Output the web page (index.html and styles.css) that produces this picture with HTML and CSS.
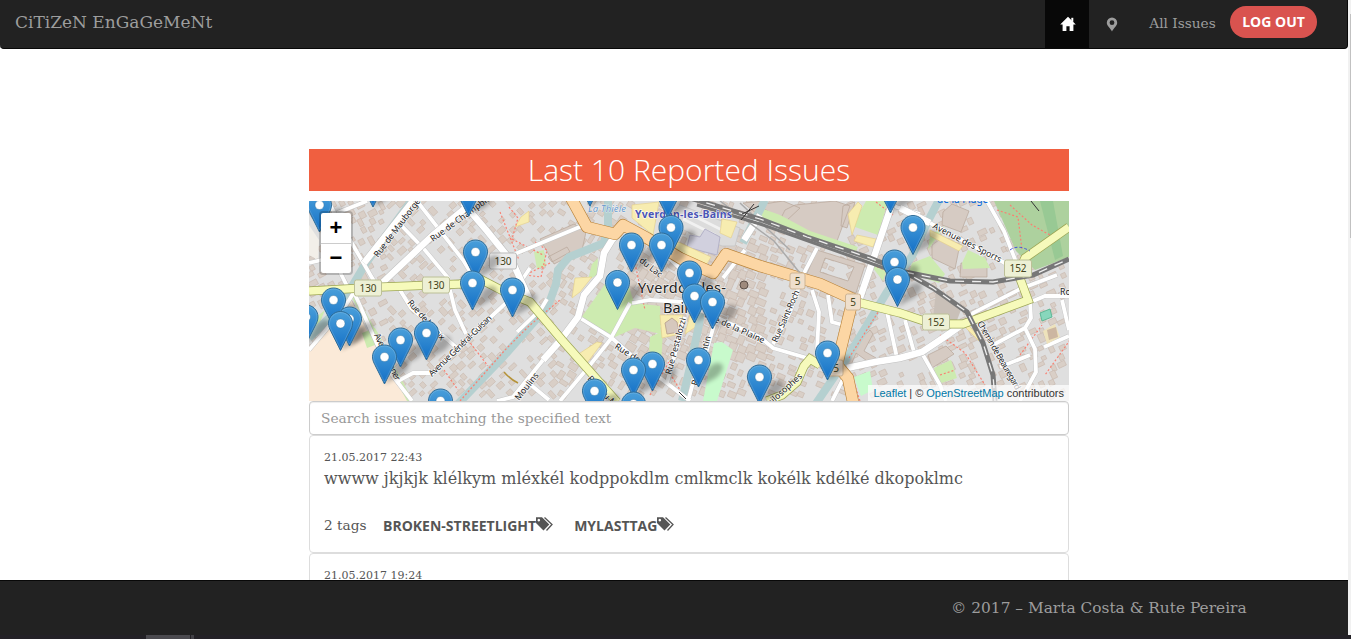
FILE: index.html
```html
<!DOCTYPE html>
<html lang="en">
<head>
<meta charset="utf-8">
<title>Citizen Engagement</title>
<link rel="stylesheet" href="styles.css">
</head>
<body>
<div class="window">
  <div class="page">
    <nav class="navbar">
      <a class="brand">CiTiZeN EnGaGeMeNt</a>
      <div class="nav-links">
        <a class="nav-item active"><svg width="16" height="16" viewBox="0 0 16 16"><path fill="#fff" d="M8 .8 15.8 8.6H13.4V15H9.6V10.3H6.4V15H2.6V8.6H.2Z"/><path fill="#fff" d="M11.3 1.8h2v4h-2z"/></svg></a>
        <a class="nav-item pin"><svg width="12" height="15" viewBox="0 0 12 15"><path fill="#9d9d9d" fill-rule="evenodd" d="M6 .5A5.2 5.2 0 0 0 .8 5.7C.8 9 4.4 11 6 14.5 7.600 11 11.200 9 11.200 5.700A5.200 5.200 0 0 0 6 .5ZM6 3.300A2.400 2.400 0 1 1 6 8.100 2.400 2.400 0 0 1 6 3.300Z"/></svg></a>
        <a class="nav-item issues">All Issues</a>
        <button class="logout">LOG OUT</button>
      </div>
    </nav>
    <main class="content">
      <h2 class="title">Last 10 Reported Issues</h2>
      <div class="map">
        <svg class="tiles" width="760" height="200" viewBox="309 201 760 200">
          <defs>
            <linearGradient id="pinFill" x1="0" y1="0" x2="0" y2="1"><stop offset="0" stop-color="#4a9fda"/><stop offset="1" stop-color="#126fc6"/></linearGradient>
            <filter id="soft" x="-50%" y="-50%" width="200%" height="200%"><feGaussianBlur stdDeviation="2.2"/></filter>
            <g id="shade"><path d="M0 27 10 8Q18 0 24 5 26 11 17 18Z" fill="#000" opacity=".27" filter="url(#soft)"/></g>
            <g id="marker"><path d="M0-12C-6.800-12-12-6.600-12-.2-12 3-10.800 5.500-9.700 7.700L0 27 9.700 7.700C10.800 5.500 12 3 12-.2 12-6.600 6.800-12 0-12Z" fill="url(#pinFill)" stroke="#2e6c97"/><path d="M0-11C-6-11-11-6-11-.2-11 3-10 5-8.800 7.300L0 25 8.800 7.300C10 5 11 3 11-.2 11-6 6-11 0-11Z" fill="none" stroke="#fff" stroke-opacity=".15"/><circle r="4.500" fill="#fff" stroke="#2e6c97" stroke-opacity=".5" stroke-width=".8"/></g>
            <g id="streets" fill="none">
              <path d="M337 213 367 201M330 205 350 240 371 276 377 286M417 201 463 260 474 278M398 222 424 249 449 279M309 263 343 255M340 272 349 290"/>
              <path d="M353 290 377 344 392 375 412 401M400 290 411 308 457 348M450 290 455 310 466 334M398 381 413 373 433 373 466 340 507 302 530 268M309 350 345 307 354 292"/>
              <path d="M510 256 582 226M517 332 541 309 547 299M497 401 513 397 543 360 560 343M560 401 586 370 610 340 630 303M580 318 612 338 633 357 690 401M525 380 549 400"/>
              <path d="M685 317 667 383M714 325 704 360 693 383 688 401M632 303 650 300 700 303M700 310 760 337 773 348 807 358 820 365M817 248 803 275 790 312 773 344M812 290 819 312 817 350M828 295 832 322 843 325M645 235 690 278 724 300"/>
              <path d="M887 312 897 358M905 320 914 352M900 208 930 223 1003 262 1018 271M987 201 1004 231 1018 267M971 319 973 313 1020 289 1057 275M1030 302 1031 318 1025 328 993 345M1025 328 1035 349 1036 372 1020 401M1000 367 1030 355M1033 301 1045 296 1069 296M923 355 940 385 946 401M1044 347 1069 336M1062 300 1069 330M745 250 723 278M890 205 920 214M832 401 844 377 847 367"/>
            </g>
            <g id="wideStreets" fill="none">
              <path d="M380 285 432 236 475 200M413 201 364 263M463 203 487 231 513 263 529 298M543 360 560 341 578 317 584 295 600 276 604 253 612 240 620 232M860 298 876 251 893 201M847 368 875 362 900 358 922 352 943 338 963 324M760 215 744 240M900 208 930 223"/>
            </g>
            <path id="yellowRoad" fill="none" d="M309 291 382 287 460 284 480 279 505 292 530 302 562 340 617 402M857 302 900 313 933 324 963 324 1028 300 1018 273 1025 258 1069 227M767 401 782 395 797 382 804 366 810 359 820 365"/>
            <path id="orangeRoad" fill="none" stroke-linejoin="round" d="M570 196 587 227 615 234 623 225 647 238 680 258 713 273 726 254 760 266 820 284 853 299 840 352 837 365 848 378 853 402"/>
            <path id="rails" fill="none" d="M690 198 760 219 807 237 870 258 905 272 933 288 967 312 983 343 993 375 995 401M905 272 950 281 993 282 1033 275 1069 259"/>
          </defs>
          <rect x="309" y="201" width="760" height="200" fill="#dfdfdf"/>
          <g id="buildings" class="building"></g>
          <g class="big-building">
            <path d="M540 239 574 224 586 232 582 250 554 264ZM795 205 835 201 850 206 837 241 810 233 780 220 785 210ZM943 212 952 204 969 211 961 232 942 225ZM932 245 942 238 960 244 955 269 932 258ZM961 263 987 263 987 277 960 277ZM843 206 855 202 847 228 841 226ZM743 203 764 201 756 213ZM758 205 783 201 800 208 785 222ZM857 343 870 330 873 334 864 351 876 358 870 363 856 353 849 370 844 366ZM928 355 946 346 954 354 932 368ZM548 257 567 247 570 252 552 262Z"/>
            <path fill-rule="evenodd" d="M817 250 865 265 856 293 806 276ZM825 258 820 272 848 281 854 267Z"/>
          </g>
          <path d="M680 205 740 228 735 246 722 246 700 237 665 222Z" fill="#dcdcdc" stroke="#c9c9c9"/>
          <path d="M688 213 722 230M683 219 715 235" stroke="#f1f1f1" stroke-width="3"/>
          <path d="M690 235 700 237 705 229 720 237 717 255 705 252 687 247Z" fill="#d1d0de" stroke="#b4b2c8"/>
          <path d="M936 291 962 307 956 323 933 318Z" fill="#c9c0b8"/>
          <g fill="#fbead8"><path d="M309 348 351 300 377 350 408 401H309Z"/><path d="M309 225 319 240 318 260 309 255Z" fill="#f2efe9"/></g>
          <g fill="#cdebb0">
            <path d="M351 296 356 294 413 401 407 401ZM362 333 375 328 383 342 367 348ZM309 323 325 310 318 327 309 334ZM581 318 605 284 628 283 634 303 660 306 661 334 635 328 615 337ZM592 264 598 258 597 275 588 280ZM650 337 663 331 661 365 649 350ZM758 207 780 215 810 231 858 247 855 253 808 236 756 216ZM866 201 888 201 878 235 852 226ZM962 263 968 250 985 258 990 268 963 269ZM912 263 930 256 945 274 939 283 909 273ZM930 235 945 226 928 250ZM934 368 951 360 957 378 938 384ZM869 263 887 269 883 281ZM534 252 544 250 546 266 537 269Z"/>
            <path fill="#c8facc" d="M714 343 722 342 733 350 717 401H703ZM854 377 870 371 873 390 861 396Z"/>
            <path fill="#add19e" d="M994 201H1069V257L1035 270 1016 251Z"/>
            <path fill="#98c994" d="M1040 201 1053 201 1063 256 1055 260Z"/>
          </g>
          <g fill="#f7ecb0" stroke="#e4cf88" stroke-width=".6"><path d="M632 205 659 202 653 235 632 218ZM676 241 711 257 705 267 676 254ZM521 217 529 211 529 222 515 227ZM577 355 597 342 602 343 587 363ZM575 278 592 277 580 292 572 298ZM848 214 858 202 862 206 852 235ZM857 235 876 239 873 247 854 241ZM930 230 963 246 959 251 930 236ZM722 219 737 222 731 238 720 233ZM967 323 976 334 979 341 966 328ZM660 315 683 315 680 334 662 338ZM690 315 697 326 685 334Z"/></g>
          <path d="M665 323 672 318 677 322 679 332 667 334Z" fill="#d6c8bd" stroke="#bea894"/>
          <g class="river"><path d="M309 338 333 314 351 288 366 263 412 200M456 406 503 357 548 306 556 284 558 270 569 257 604 243 608 225 608 198M940 198 927 223 912 256 887 292 847 358 815 405M765 200 743 243M702 302 699 325 690 367 682 401"/></g>
          <g class="footway"><path d="M460 401 505 350 529 326 560 300M468 340 488 366M444 370 458 390M500 212 519 260M509 207 518 218 512 239 543 255M535 242 547 250 541 277 525 275 550 263M997 210 1018 217 1022 250M1010 205 1032 225 1050 235M849 358 882 306M866 262 887 271M940 335 965 353 985 385M940 375 955 370M853 380 860 401M1020 355 1042 325M1070 340 1045 375M630 240 645 310M650 395 670 360M703 300 725 307M668 370 680 390M876 202 893 215"/></g>
          <use href="#streets" stroke="#c4c4c4" stroke-width="4.700"/><use href="#streets" stroke="#fff" stroke-width="3.800"/>
          <use href="#wideStreets" stroke="#c0c0c0" stroke-width="7.500"/><use href="#wideStreets" stroke="#fff" stroke-width="6.500"/>
          <g fill="none"><use href="#yellowRoad" stroke="#9ca554" stroke-width="9"/><use href="#yellowRoad" stroke="#f6fabb" stroke-width="7.600"/><use href="#orangeRoad" stroke="#b98339" stroke-width="12"/><use href="#orangeRoad" stroke="#fcd6a4" stroke-width="10.800"/></g>
          <path d="M720 201 774 241 804 278M740 203 790 250" fill="none" stroke="#aaa" stroke-width="1.500"/>
          <use href="#rails" stroke="#777" stroke-width="5"/><use href="#rails" stroke="#eee" stroke-width="1.300" stroke-dasharray="9 8"/>
          <path d="M697 205 760 224 870 263 905 276" fill="none" stroke="#777" stroke-width="3"/>
          <path d="M1010 250Q1018 244 1030 251" fill="none" stroke="#4455dd" stroke-dasharray="3 2"/>
          <path d="M504 372Q510 379 518 383" fill="none" stroke="#b59338" stroke-width="1.500"/>
          <path d="M1040 313 1050 309 1052 317 1042 321Z" fill="#88d7bc" stroke="#5eb795"/>
          <path d="M1043 331 1055 324 1060 337 1047 344Z" fill="#eee2bb"/><path d="M1047 330 1056 327 1058 337 1049 340Z" fill="#ccb6a1"/>
          <g class="street-names">
            <text transform="translate(378 258) rotate(-53)" textLength="74">Rue de Mauborget</text>
            <text transform="translate(433 242) rotate(-36)">Rue de Champblond</text>
            <text transform="translate(407 303) rotate(48)" textLength="51">Rue de la Paix</text>
            <text transform="translate(374 335) rotate(65)" textLength="51">Avenue Kiener</text>
            <text transform="translate(432 377) rotate(-44)" textLength="84">Avenue Général-Guisan</text>
            <text transform="translate(519 401) rotate(-52)">Moulins</text>
            <text transform="translate(587 379) rotate(47)">Rue du Midi</text>
            <text transform="translate(614 348) rotate(32)">Rue des</text>
            <text transform="translate(633 257) rotate(38)">e du Lac</text>
            <text transform="translate(671 375) rotate(-75)">Rue Pestalozzi</text>
            <text transform="translate(697 386) rotate(-74)">Rue Valentin</text>
            <text transform="translate(704 317) rotate(24)">Rue de la Plaine</text>
            <text transform="translate(777 343) rotate(-66)" textLength="56">Rue Saint-Roch</text>
            <text transform="translate(766 410) rotate(-42)">Philosophes</text>
            <text transform="translate(932 228) rotate(27)" textLength="76">Avenue des Sports</text>
            <text transform="translate(977 323) rotate(60)" textLength="78">Chemin de Beauregard</text>
            <text x="1060" y="295">Rou</text>
          </g>
          <text class="water-name" x="588" y="212" textLength="38">La Thièle</text>
          <text class="station" x="635" y="218" textLength="97">Yverdon-les-Bains</text>
          <text class="place" x="937" y="203">de la Plage</text>
          <g class="town"><text x="638" y="293" textLength="88">Yverdon-les-</text><text x="663" y="313" textLength="37">Bains</text></g>
          <circle cx="744" cy="285" r="4" fill="#9e8a7c" stroke="#5d5149"/>
          <path d="M754 204 741 220M759 206 742 214M1031 201 1039 211M679 392 686 399" fill="none" stroke="#333"/>
          <g class="shields"><g><rect x="354.500" y="280" width="27" height="16" rx="2"/><text x="368" y="292">130</text></g><g><rect x="422.500" y="277" width="27" height="16" rx="2"/><text x="436" y="289">130</text></g><g class="grey"><rect x="489.500" y="253" width="27" height="16" rx="2"/><text x="503" y="265">130</text></g><g><rect x="922.500" y="314" width="27" height="16" rx="2"/><text x="936" y="326">152</text></g><g><rect x="1004.500" y="260" width="27" height="17" rx="2"/><text x="1018" y="272">152</text></g><g class="tan"><rect x="790" y="273" width="15" height="16" rx="2"/><text x="797.500" y="285">5</text><rect x="845.500" y="294" width="15" height="16" rx="2"/><text x="853" y="306">5</text><rect x="828" y="360" width="15" height="16" rx="2"/><text x="836" y="372">5</text></g></g>
          <g id="markers"></g>
        </svg>
        <div class="zoom-control"><a>+</a><a>−</a></div>
        <div class="attribution"><a>Leaflet</a> | © <a>OpenStreetMap</a> contributors</div>
      </div>
      <input class="search" placeholder="Search issues matching the specified text">
      <article class="issue">
        <time class="date">21.05.2017 22:43</time>
        <p class="description">wwww jkjkjk klélkym mléxkél kodppokdlm cmlkmclk kokélk kdélké dkopoklmc</p>
        <div class="tags"><span class="count">2 tags</span>
          <span class="tag">BROKEN-STREETLIGHT<svg width="18" height="14" viewBox="0 0 18 14"><path fill="#555" fill-rule="evenodd" d="M0 .3H6L13.300 7.600 7.500 13.500 0 6ZM2.800 1.800A1.300 1.300 0 1 0 2.810 1.800Z"/><path d="M8.500.5 16 7.500 10.500 13.500" fill="none" stroke="#555" stroke-width="1.300"/></svg></span>
          <span class="tag">MYLASTTAG<svg width="18" height="14" viewBox="0 0 18 14"><path fill="#555" fill-rule="evenodd" d="M0 .3H6L13.300 7.600 7.500 13.500 0 6ZM2.800 1.800A1.300 1.300 0 1 0 2.810 1.800Z"/><path d="M8.500.5 16 7.500 10.500 13.500" fill="none" stroke="#555" stroke-width="1.300"/></svg></span>
        </div>
      </article>
      <article class="issue"><time class="date">21.05.2017 19:24</time></article>
    </main>
    <footer class="footer"><span>© 2017 – Marta Costa &amp; Rute Pereira</span></footer>
  </div>
  <div class="scrollbar"><div class="thumb"></div></div>
  <div class="taskbar"><i></i><i></i></div>
</div>
<script src="map.js"></script>
</body>
</html>
```
FILE: styles.css
```css
* { box-sizing: border-box; }
body { margin: 0; background: #fff; font-family: "DejaVu Serif", serif; color: #555; overflow: hidden; }
.window { position: relative; width: 1351px; height: 639px; display: flex; }
.page { width: 1348px; height: 639px; display: flex; flex-direction: column; }
.navbar { height: 49px; flex: none; background: #222; border: 1px solid #080808; border-width: 0 1px 1px 0; border-radius: 0 0 4px 4px; display: flex; justify-content: space-between; padding: 0 30px 0 15px; color: #9d9d9d; }
.brand { font-size: 17px; line-height: 45px; white-space: nowrap; }
.nav-links { display: flex; }
.nav-item { display: flex; align-items: center; justify-content: center; width: 44px; height: 48px; }
.nav-item.active { background: #080808; padding-left: 2px; }
.nav-item.pin { width: 46px; }
.nav-item.issues { width: 95px; font-size: 13.7px; padding-bottom: 2px; white-space: nowrap; }
.logout { width: 87px; height: 32px; margin-top: 6px; padding: 0 0 1px; border: 0; border-radius: 16px; background: #d9534f; color: #fff; font: 700 14px "Open Sans", sans-serif; }
.content { width: 760px; height: 531px; margin: 0 0 0 309px; padding-top: 100px; overflow: hidden; }
.title { margin: 0 0 10px; height: 42px; background: #f05f40; color: #fff; font: 300 30px/42px "Open Sans", sans-serif; text-align: center; }
.map { position: relative; height: 200px; overflow: hidden; }
.tiles { display: block; }
.building { fill: #d9cfc7; stroke: #c9b9ae; stroke-width: .6; }
.big-building { fill: #d6cbc3; stroke: #b8a699; stroke-width: .7; }
.river { fill: none; stroke: #b5d0d0; stroke-width: 8; }
.footway { fill: none; stroke: #fa8072; stroke-width: 1.2; stroke-dasharray: 2 2; }
.shields rect { fill: #edf0d5; stroke: #bcc097; }
.shields .grey rect { fill: #eee; stroke: #bbb; }
.shields .tan rect { fill: #efdfcc; stroke: #ceb493; }
.shields text { font: 10px "Noto Sans", sans-serif; fill: #454520; text-anchor: middle; }
.street-names text { font: 8.7px "Noto Sans", sans-serif; fill: #222; stroke: rgba(255,255,255,.75); stroke-width: 1.5px; paint-order: stroke; }
.station { font: 700 10.500px "Noto Sans", sans-serif; fill: #4a55b5; stroke: #fff; stroke-width: 1px; paint-order: stroke; }
.water-name { font: italic 9.500px "Noto Sans", sans-serif; fill: #6699cc; stroke: #fff; stroke-width: .6px; paint-order: stroke; }
.place { font: 10px "Noto Sans", sans-serif; fill: #0066dd; }
.town { font: 14.500px "Noto Sans", sans-serif; fill: #222; stroke: rgba(255,255,255,.7); stroke-width: 1.5px; paint-order: stroke; }
.zoom-control { position: absolute; left: 10px; top: 10px; width: 34px; border: 2px solid rgba(0,0,0,.2); border-radius: 4px; background-clip: padding-box; background-color: #fff; }
.zoom-control a { display: block; height: 30px; text-align: center; color: #000; font: 700 22px/30px "Liberation Sans", Arial, sans-serif; }
.zoom-control a + a { border-top: 1px solid #ccc; line-height: 28px; }
.attribution { position: absolute; right: 0; bottom: 0; padding: 0 5px; background: rgba(255,255,255,.7); color: #333; font: 11px/16px "Liberation Sans", Arial, sans-serif; letter-spacing: -.02px; }
.attribution a { color: #0078a8; }
.search { display: block; width: 760px; height: 34px; padding: 0 11px 1px; border: 1px solid #ccc; border-radius: 4px; box-shadow: inset 0 1px 1px rgba(0,0,0,.075); font: 13.75px "DejaVu Serif", serif; }
.search::placeholder { color: #999; opacity: 1; }
.issue { height: 118px; border: 1px solid #ddd; border-radius: 4px; padding: 13px 14px; }
.date { display: block; font-size: 11px; line-height: 17px; }
.description { margin: 0; font-size: 16px; line-height: 26px; white-space: nowrap; }
.tags { display: flex; align-items: center; height: 20px; margin-top: 23px; }
.count { width: 59px; font-size: 13.7px; line-height: 20px; }
.tag { display: flex; align-items: center; font: 700 14px/22px "Open Sans", sans-serif; margin-right: 20px; padding-top: 1px; }
.tag svg { margin-top: -3px; }
.footer { height: 59px; flex: none; background: #222; border-top: 1px solid #080808; color: #9d9d9d; font-size: 15.4px; line-height: 55px; padding-left: 951px; white-space: nowrap; }
.scrollbar { width: 3px; height: 635px; background: #f1f1f1; padding: 14px 0 0 2px; }
.thumb { height: 224px; background: #c1c1c1; }
.taskbar { position: absolute; left: 0; bottom: 0; width: 1351px; height: 4px; background: #232126; display: flex; gap: 1px; padding-left: 146px; }
.taskbar i { width: 44px; background: #4b4a4f; }
.taskbar i + i { width: 3px; background: #424146; }
```
FILE: map.js
```js
const NS = 'http://www.w3.org/2000/svg';

// Deterministic footprints, turned to follow the streets of each quarter.
let seed = 41;
const rnd = () => (seed = (seed * 16807) % 2147483647) / 2147483647;
function quarterAngle(x) {
  if (x < 385) return -28;
  if (x < 560) return -42;
  if (x < 680) return 32;
  if (x < 850) return 23;
  return -25;
}
const houses = document.getElementById('buildings');
for (let y = 204; y < 402; y += 9) {
  for (let x = 312; x < 1069; x += 10) {
    const dense = x > 630 && x < 770 && y > 245 && y < 360;
    if (!dense && rnd() < 0.34) continue;
    const w = dense ? 7 + rnd() * 4 : 4 + rnd() * 5;
    const h = dense ? 6 + rnd() * 3 : 3.5 + rnd() * 3;
    const cx = x + rnd() * 4 - 2, cy = y + rnd() * 4 - 2;
    const r = document.createElementNS(NS, 'rect');
    r.setAttribute('x', -w / 2);
    r.setAttribute('y', -h / 2);
    r.setAttribute('width', w);
    r.setAttribute('height', h);
    r.setAttribute('transform', `translate(${cx} ${cy}) rotate(${quarterAngle(x) + (rnd() < 0.3 ? 90 : 0)})`);
    houses.appendChild(r);
  }
}

const points = [
  [373, 180], [590, 179], [890.5, 186], [468.500, 189], [668, 191], [319.500, 205],
  [671, 227.500], [913, 227.500], [631.500, 245], [661.500, 245], [475.500, 252], [894.500, 262],
  [689.500, 273], [897.500, 279.500], [617.500, 282.500], [472.500, 283], [512.500, 290], [694.500, 296],
  [333.500, 300], [712.500, 302], [306, 317], [349.500, 319], [340.500, 323.500], [426.500, 333],
  [400.500, 340], [827.500, 353], [384.500, 357], [698.500, 360], [652.500, 364], [633.500, 370],
  [759.500, 377], [594.500, 391], [440.500, 401], [633.500, 404]
];
const layer = document.getElementById('markers');
for (const symbol of ['shade', 'marker']) {
  for (const [x, y] of points) {
    const u = document.createElementNS(NS, 'use');
    u.setAttribute('href', '#' + symbol);
    u.setAttribute('x', x);
    u.setAttribute('y', y);
    layer.appendChild(u);
  }
}
```
